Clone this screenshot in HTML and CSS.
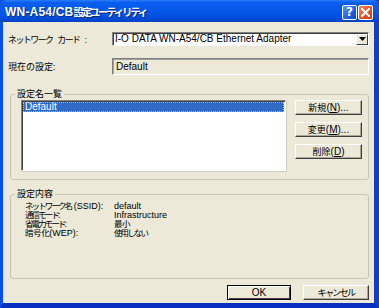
FILE: index.html
```
<!DOCTYPE html>
<html lang="ja">
<head>
<meta charset="utf-8">
<title>WN-A54/CB設定ユーティリティ</title>
<link rel="stylesheet" href="styles.css">
</head>
<body>
<div class="window">
  <div class="titlebar">
    <span class="title">WN-A54/CB<span class="tj">設定ユーティリティ</span></span>
    <div class="tbtns">
      <span class="tbtn help">?</span>
      <span class="tbtn close"><svg width="9" height="9" viewBox="0 0 9 9"><path d="M1 1L8 8M8 1L1 8" stroke="#fff" stroke-width="2" stroke-linecap="square"/></svg></span>
    </div>
  </div>
  <div class="client">
    <div class="row row1">
      <span class="lbl k sp">ネットワーク カード :</span>
      <div class="combo">
        <span class="combo-text">I-O DATA WN-A54/CB Ethernet Adapter</span>
        <span class="drop"><svg width="7" height="4" viewBox="0 0 7 4"><path d="M0 0H7L3.5 4Z" fill="#000"/></svg></span>
      </div>
    </div>
    <div class="row row2">
      <span class="lbl j">現在の設定:</span>
      <div class="field">Default</div>
    </div>
    <fieldset class="group g1">
      <legend class="j">設定名一覧</legend>
      <div class="g1-body">
        <div class="listbox">
          <div class="item sel">Default</div>
        </div>
        <div class="btncol">
          <span class="btn"><span class="j">新規</span>(<u>N</u>)...</span>
          <span class="btn"><span class="j">変更</span>(<u>M</u>)...</span>
          <span class="btn"><span class="j">削除</span>(<u>D</u>)</span>
        </div>
      </div>
    </fieldset>
    <fieldset class="group g2">
      <legend class="j">設定内容</legend>
      <div class="info">
        <span><span class="ik">ネットワーク名</span> (SSID):</span><span>default</span>
        <span class="ik">通信モード:</span><span>Infrastructure</span>
        <span class="ik">省電力モード:</span><span class="ij">最小</span>
        <span><span class="ij">暗号化</span>(WEP):</span><span class="ik">使用しない</span>
      </div>
    </fieldset>
    <div class="footer">
      <span class="btn ok">OK</span>
      <span class="btn cancel"><span class="k">キャンセル</span></span>
    </div>
  </div>
</div>
</body>
</html>
```
FILE: styles.css
```
* { box-sizing: border-box; }
html, body { margin: 0; padding: 0; }
body {
  font-family: "Liberation Sans", "Noto Sans CJK JP", sans-serif;
  font-size: 10px;
  color: #000;
  background: #fff;
}
.j { font-size: 9px; letter-spacing: 0; }
.k { font-size: 9px; letter-spacing: -1.6px; }
.sp { word-spacing: 4px; }
.window {
  width: 379px;
  height: 308px;
  display: flex;
  flex-direction: column;
  background: #0842d0;
  border-left: 3px solid #0a4ee0;
  border-right: 5px solid #0a3fd6;
  border-bottom: 5px solid #0830c0;
}
.titlebar {
  height: 22px;
  margin-left: -3px;
  margin-right: -5px;
  padding: 0 6px 0 5px;
  display: flex;
  align-items: center;
  justify-content: space-between;
  background: linear-gradient(#2a7cf8 0%, #0a5ef0 12%, #0558ea 45%, #0350e2 75%, #0442c4 100%);
  border-radius: 6px 6px 0 0;
}
.title {
  color: #fff;
  font-weight: bold;
  font-size: 12px;
  letter-spacing: 0.2px;
  text-shadow: 1px 1px 0 #0a2a80;
}
.tj { font-size: 10.5px; letter-spacing: -2.3px; }
.tbtns { display: flex; gap: 1px; align-items: center; margin-top: 2px; }
.tbtn {
  width: 15px;
  height: 15px;
  border: 1px solid #fff;
  border-radius: 2px;
  display: flex;
  align-items: center;
  justify-content: center;
  color: #fff;
  font-weight: bold;
  font-size: 12px;
  font-family: "DejaVu Sans", sans-serif;
}
.help { background: linear-gradient(135deg, #5a9cff, #1a5ef0 60%, #1248c8); }
.close { background: linear-gradient(135deg, #f08a6a, #e2542c 55%, #c83a18); }
.client {
  flex: 1;
  background: #ece9d8;
  padding: 10px 5px 0 5px;
  display: flex;
  flex-direction: column;
}
.row { display: flex; align-items: center; }
.lbl { width: 104px; flex: none; white-space: nowrap; }
.combo {
  width: 257px;
  height: 14px;
  background: #fff;
  border-top: 1px solid #808080;
  border-left: 1px solid #808080;
  border-bottom: 1px solid #fff;
  border-right: 1px solid #fff;
  box-shadow: inset 1px 1px 0 #404040;
  display: flex;
  align-items: center;
  justify-content: space-between;
  padding-left: 2px;
}
.combo-text { line-height: 12px; }
.drop {
  width: 12px;
  height: 11px;
  background: #ece9d8;
  border-top: 1px solid #fff;
  border-left: 1px solid #fff;
  border-right: 1px solid #404040;
  border-bottom: 1px solid #404040;
  display: flex;
  align-items: center;
  justify-content: center;
}
.row2 { margin-top: 12px; }
.field {
  width: 257px;
  height: 17px;
  border-top: 1px solid #808080;
  border-left: 1px solid #808080;
  border-bottom: 1px solid #fff;
  border-right: 1px solid #fff;
  box-shadow: inset 1px 1px 0 #a0a0a0;
  padding-left: 3px;
  display: flex;
  align-items: center;
}
.group {
  margin: 0 0 0 2px;
  width: 359px;
  padding: 0;
  border: 1px solid #c8c5b4;
  border-radius: 3px;
  min-width: 0;
}
.group legend {
  padding: 0 2px;
  margin-left: 4px;
  line-height: 10px;
}
.g1 { margin-top: 14px; height: 91px; }
.g1-body {
  display: flex;
  padding: 1px 6px 0 10px;
  gap: 9px;
}
.listbox {
  width: 266px;
  height: 71px;
  background: #fff;
  border-top: 1px solid #808080;
  border-left: 1px solid #808080;
  border-bottom: 1px solid #fff;
  border-right: 1px solid #fff;
  box-shadow: inset 1px 1px 0 #404040, 1px 1px 0 #d4d0c8;
  padding: 1px;
}
.item { height: 10px; line-height: 10px; padding-left: 2px; }
.sel { background: #316ac5; color: #fff; outline: 1px dotted #9bb8e8; outline-offset: -1px; }
.btncol { display: flex; flex-direction: column; gap: 7px; }
.btn {
  width: 67px;
  height: 15px;
  display: flex;
  align-items: center;
  justify-content: center;
  background: #ece9d8;
  border-top: 1px solid #fff;
  border-left: 1px solid #fff;
  border-right: 1px solid #404040;
  border-bottom: 1px solid #404040;
  box-shadow: inset -1px -1px 0 #aca899;
  white-space: nowrap;
}
.g2 { margin-top: 9px; height: 90px; }
.info {
  display: grid;
  grid-template-columns: 89px auto;
  padding: 3px 0 0 14px;
  font-size: 9px;
  line-height: 9px;
  white-space: nowrap;
}
.ik { font-size: 8.5px; letter-spacing: -1.9px; }
.ij { font-size: 8.5px; letter-spacing: -0.4px; }
.footer {
  display: flex;
  justify-content: flex-end;
  gap: 12px;
  margin-top: 6px;
}
.ok {
  width: 64px;
  border: 1px solid #000;
  box-shadow: inset 1px 1px 0 #fff, inset -1px -1px 0 #404040;
}
.cancel { width: 66px; }
```
